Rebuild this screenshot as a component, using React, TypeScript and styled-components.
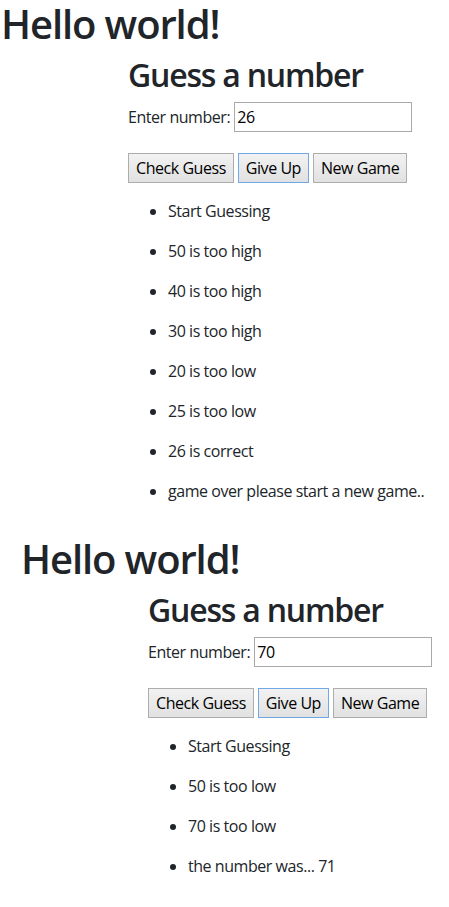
import React from "react";
import styled, { createGlobalStyle } from "styled-components";

const FONT = `"Open Sans", "Noto Sans", sans-serif`;

const GlobalStyle = createGlobalStyle`
  * { box-sizing: border-box; }
  html, body { margin: 0; padding: 0; background: #ffffff; }
  body {
    font-family: ${FONT};
    font-size: 16px;
    line-height: 1.5;
    color: #212529;
    letter-spacing: -0.45px;
  }
`;

const Page = styled.div`
  display: flex;
  flex-direction: column;
`;

const Section = styled.section<{ $indent: number }>`
  display: flex;
  flex-direction: column;
  padding-left: ${(p) => p.$indent}px;
`;

const Title = styled.h1`
  margin: 0 0 8px;
  padding-left: 1px;
  font-size: 40px;
  font-weight: 600;
  line-height: 48px;
  letter-spacing: -1.1px;
  white-space: nowrap;
`;

const Game = styled.div`
  display: flex;
  flex-direction: column;
  padding-left: 128px;
`;

const Heading = styled.h2`
  margin: 0 0 8px;
  font-size: 32px;
  font-weight: 600;
  line-height: 38px;
  letter-spacing: -1.2px;
  white-space: nowrap;
`;

const InputRow = styled.div`
  display: flex;
  align-items: center;
  gap: 4px;
  height: 30px;
  margin-bottom: 21px;
  white-space: nowrap;
`;

const Label = styled.label`
  font-size: 16px;
`;

const NumberInput = styled.input`
  width: 178px;
  height: 30px;
  padding: 0 2px;
  border: 1px solid #a9a9a9;
  border-radius: 0;
  font-family: ${FONT};
  font-size: 16px;
  letter-spacing: -0.45px;
  color: #000;
  background: #fff;
  outline: none;
`;

const ButtonRow = styled.div`
  display: flex;
  gap: 4px;
  height: 30px;
  margin-bottom: 16px;
`;

const Button = styled.button<{ $focused?: boolean }>`
  height: 30px;
  padding: 0 7px;
  border: 1px solid ${(p) => (p.$focused ? "#6ea8e8" : "#adadad")};
  border-radius: 0;
  background: linear-gradient(#f2f2f2, #e1e1e1);
  font-family: ${FONT};
  font-size: 16px;
  letter-spacing: -0.45px;
  color: #000;
  white-space: nowrap;
  cursor: pointer;
`;

const Log = styled.ul`
  margin: 0 0 16px;
  padding-left: 40px;
  list-style: disc;
`;

const LogItem = styled.li`
  margin-bottom: 16px;
  line-height: 24px;
  white-space: nowrap;
`;

type GameData = { value: string; log: string[] };

const games: { indent: number; data: GameData }[] = [
  {
    indent: 0,
    data: {
      value: "26",
      log: [
        "Start Guessing",
        "50 is too high",
        "40 is too high",
        "30 is too high",
        "20 is too low",
        "25 is too low",
        "26 is correct",
        "game over please start a new game..",
      ],
    },
  },
  {
    indent: 20,
    data: {
      value: "70",
      log: ["Start Guessing", "50 is too low", "70 is too low", "the number was... 71"],
    },
  },
];

function GuessGame({ data }: { data: GameData }) {
  return (
    <Game>
      <Heading>Guess a number</Heading>
      <InputRow>
        <Label>Enter number:</Label>
        <NumberInput type="text" defaultValue={data.value} />
      </InputRow>
      <ButtonRow>
        <Button>Check Guess</Button>
        <Button $focused>Give Up</Button>
        <Button>New Game</Button>
      </ButtonRow>
      <Log>
        {data.log.map((line, i) => (
          <LogItem key={i}>{line}</LogItem>
        ))}
      </Log>
    </Game>
  );
}

export default function App() {
  return (
    <>
      <GlobalStyle />
      <Page>
        {games.map((g, i) => (
          <Section key={i} $indent={g.indent}>
            <Title>Hello world!</Title>
            <GuessGame data={g.data} />
          </Section>
        ))}
      </Page>
    </>
  );
}
